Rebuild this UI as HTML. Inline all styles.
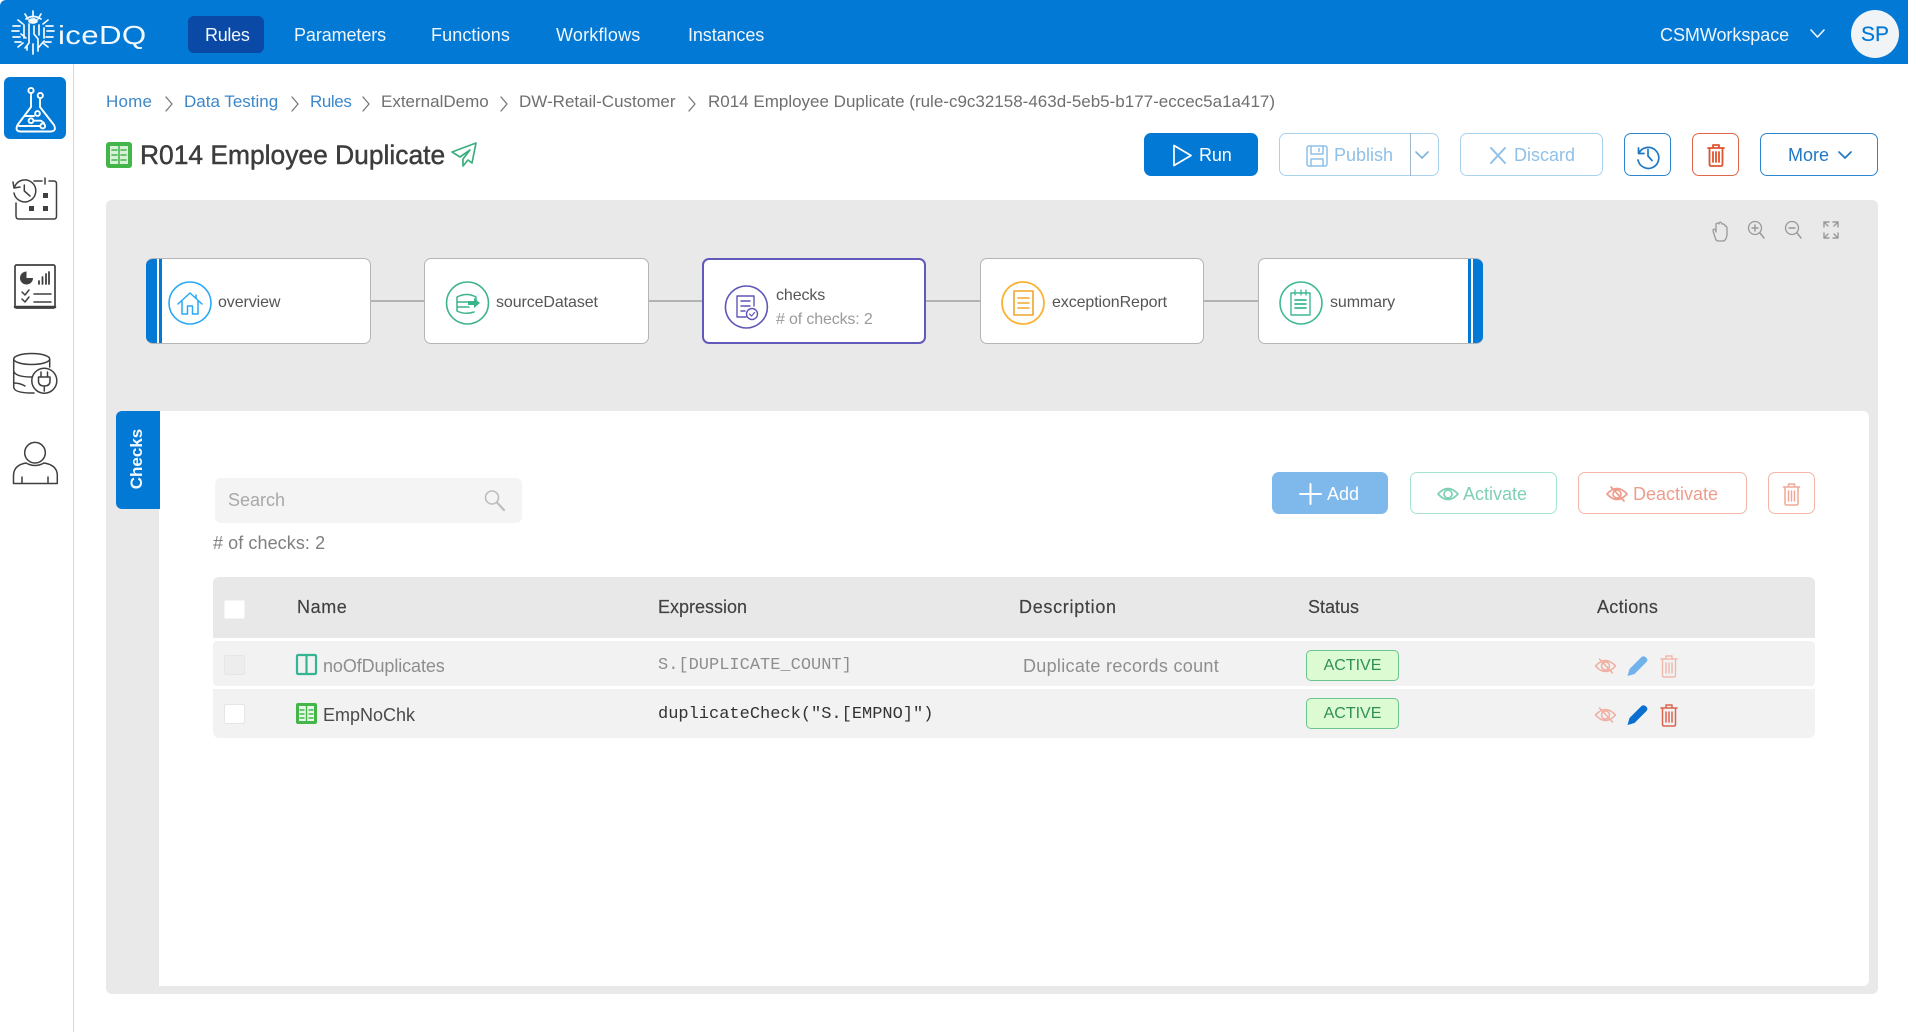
<!DOCTYPE html>
<html><head><meta charset="utf-8"><title>iceDQ</title>
<style>
html,body{margin:0;padding:0;width:1908px;height:1032px;overflow:hidden;background:#fff;font-family:"Liberation Sans",Arial,sans-serif;color:#4a4a4a}
.a{position:absolute}
.t{position:absolute;white-space:nowrap;line-height:24px;height:24px}
.b{position:absolute;box-sizing:border-box;border-radius:7px;background:#fff}
.n{position:absolute;box-sizing:border-box;top:258px;height:86px;width:225px;background:#fff;border:1.5px solid #b5b5b5;border-radius:7px;overflow:hidden}
.row{position:absolute;left:213px;width:1602px;background:#f2f2f3;border-radius:4px}
.cb{position:absolute;left:224px;width:21px;height:20px;background:#fff;border:1px solid #e6e6e6;border-radius:2px;box-sizing:border-box}
.nav{color:#f0f6fc;font-size:18px}
.bc{font-size:17px;top:90px;color:#6f6f6f}
.l{color:#3d87c9}
.th{font-size:18px;top:595px;color:#404040;-webkit-text-stroke:.15px #404040}
.mono{font-family:"Liberation Mono",monospace;font-size:17px}
.act{position:absolute;left:1306px;width:93px;height:31px;box-sizing:border-box;background:#dcfbd2;border:1px solid #6cc48e;border-radius:5px;color:#2f8f57;font-size:16px;line-height:30px;text-align:center}
.nt{font-size:16px;color:#555;top:291px;letter-spacing:-.1px}
svg.o{position:absolute;left:0;top:0;z-index:5;pointer-events:none}
</style></head><body>

<div class="a" style="left:0;top:0;width:1908px;height:64px;background:#0379d6;border-top-left-radius:6px"></div>
<div class="a" style="left:188px;top:16px;width:76px;height:37px;background:#0a49a6;border-radius:6px"></div>
<div class="t" style="left:58px;top:20px;height:30px;line-height:30px;font-size:26px;color:#f4f9fd;letter-spacing:.3px;transform:scaleX(1.2);transform-origin:left center">iceDQ</div>
<div class="t nav" style="left:205px;top:23px;letter-spacing:-.3px">Rules</div>
<div class="t nav" style="left:294px;top:23px;letter-spacing:-.1px">Parameters</div>
<div class="t nav" style="left:431px;top:23px;letter-spacing:.1px">Functions</div>
<div class="t nav" style="left:556px;top:23px;letter-spacing:.2px">Workflows</div>
<div class="t nav" style="left:688px;top:23px;letter-spacing:-.1px">Instances</div>
<div class="t nav" style="left:1660px;top:23px;letter-spacing:-.05px">CSMWorkspace</div>
<div class="a" style="left:1851px;top:10px;width:48px;height:48px;border-radius:50%;background:#f1f4f7;color:#0379d6;font-size:21px;line-height:50px;text-align:center;-webkit-text-stroke:.2px #0379d6">SP</div>

<div class="a" style="left:73px;top:64px;width:1px;height:968px;background:#d8d8d8"></div>
<div class="a" style="left:4px;top:77px;width:62px;height:62px;background:#0379d6;border-radius:6px"></div>

<div class="t bc l" style="left:106px;letter-spacing:.2px">Home</div>
<div class="t bc l" style="left:184px">Data Testing</div>
<div class="t bc l" style="left:310px;letter-spacing:-.4px">Rules</div>
<div class="t bc" style="left:381px">ExternalDemo</div>
<div class="t bc" style="left:519px">DW-Retail-Customer</div>
<div class="t bc" style="left:708px">R014 Employee Duplicate (rule-c9c32158-463d-5eb5-b177-eccec5a1a417)</div>

<div class="t" style="left:140px;top:139px;height:32px;line-height:32px;font-size:26.4px;color:#3c3c3c;-webkit-text-stroke:.45px #3c3c3c">R014 Employee Duplicate</div>

<div class="b" style="left:1144px;top:133px;width:114px;height:43px;background:#0379d6"></div>
<div class="t" style="left:1199px;top:143px;font-size:18px;color:#fff;letter-spacing:-.1px">Run</div>
<div class="b" style="left:1279px;top:133px;width:160px;height:43px;border:1px solid #a9d2ef"></div>
<div class="a" style="left:1410px;top:133px;width:1px;height:43px;background:#9fb6c8"></div>
<div class="t" style="left:1334px;top:143px;font-size:18px;color:#8fc0e8">Publish</div>
<div class="b" style="left:1460px;top:133px;width:143px;height:43px;border:1px solid #a9d2ef"></div>
<div class="t" style="left:1514px;top:143px;font-size:18px;color:#8fc0e8">Discard</div>
<div class="b" style="left:1624px;top:133px;width:47px;height:43px;border:1px solid #2c86cf"></div>
<div class="b" style="left:1692px;top:133px;width:47px;height:43px;border:1px solid #e0684a"></div>
<div class="b" style="left:1760px;top:133px;width:118px;height:43px;border:1px solid #2c86cf"></div>
<div class="t" style="left:1788px;top:143px;font-size:18px;color:#1f78c4">More</div>

<div class="a" style="left:106px;top:200px;width:1772px;height:794px;background:#e9e9ea;border-radius:6px"></div>
<div class="a" style="left:370px;top:300px;width:888px;height:2px;background:#b3b3b3"></div>

<div class="n" style="left:146px;border-left:none"><div class="a" style="left:0;top:0;width:11px;height:86px;background:#0379d6"></div><div class="a" style="left:13px;top:0;width:3px;height:86px;background:#0379d6"></div></div>
<div class="t nt" style="left:218px">overview</div>
<div class="n" style="left:424px"></div>
<div class="t nt" style="left:496px">sourceDataset</div>
<div class="n" style="left:702px;width:224px;border:2.5px solid #6259bd"></div>
<div class="t nt" style="left:776px;top:284px">checks</div>
<div class="t nt" style="left:776px;top:308px;color:#9a9a9a;letter-spacing:-.15px"># of checks: 2</div>
<div class="n" style="left:980px;width:224px"></div>
<div class="t nt" style="left:1052px">exceptionReport</div>
<div class="n" style="left:1258px;border-right:none"><div class="a" style="right:0;top:0;width:10px;height:86px;background:#0379d6"></div><div class="a" style="right:12px;top:0;width:3px;height:86px;background:#0379d6"></div></div>
<div class="t nt" style="left:1330px">summary</div>

<div class="a" style="left:159px;top:411px;width:1710px;height:575px;background:#fff;border-radius:0 6px 6px 0"></div>
<div class="a" style="left:116px;top:411px;width:44px;height:98px;background:#0379d6;border-radius:6px 0 0 6px"></div>
<div class="t" style="left:100px;top:447px;width:74px;text-align:center;font-size:17px;font-weight:bold;color:#f4f9fd;transform:rotate(-90deg)">Checks</div>

<div class="a" style="left:215px;top:478px;width:307px;height:45px;background:#f4f4f5;border-radius:6px"></div>
<div class="t" style="left:228px;top:488px;font-size:18px;color:#a8a8a8">Search</div>
<div class="t" style="left:213px;top:531px;font-size:18px;color:#7f7f7f;letter-spacing:.08px"># of checks: 2</div>

<div class="b" style="left:1272px;top:472px;width:116px;height:42px;background:#7fb8ea"></div>
<div class="t" style="left:1327px;top:482px;font-size:18px;color:#fff">Add</div>
<div class="b" style="left:1410px;top:472px;width:147px;height:42px;border:1px solid #a6e3cf"></div>
<div class="t" style="left:1463px;top:482px;font-size:18px;color:#7ed0b4">Activate</div>
<div class="b" style="left:1578px;top:472px;width:169px;height:42px;border:1px solid #f3b5a8"></div>
<div class="t" style="left:1633px;top:482px;font-size:18px;color:#ee9d8d">Deactivate</div>
<div class="b" style="left:1768px;top:472px;width:47px;height:42px;border:1px solid #f3b5a8"></div>

<div class="a" style="left:213px;top:577px;width:1602px;height:61px;background:#e8e8e9;border-radius:6px 6px 0 0"></div>
<div class="row" style="top:641px;height:45px"></div>
<div class="row" style="top:689px;height:49px;border-radius:0 0 6px 6px"></div>
<div class="cb" style="top:600px;height:19px;border-color:#f4f4f4"></div>
<div class="cb" style="top:655px;background:#ededee"></div>
<div class="cb" style="top:704px"></div>

<div class="t th" style="left:297px;letter-spacing:.6px">Name</div>
<div class="t th" style="left:658px">Expression</div>
<div class="t th" style="left:1019px;letter-spacing:.7px">Description</div>
<div class="t th" style="left:1308px">Status</div>
<div class="t th" style="left:1597px;letter-spacing:.3px">Actions</div>

<div class="t" style="left:323px;top:654px;font-size:18px;color:#8e8e8e;letter-spacing:-.1px">noOfDuplicates</div>
<div class="t mono" style="left:658px;top:654px;color:#8e8e8e">S.[DUPLICATE_COUNT]</div>
<div class="t" style="left:1023px;top:654px;font-size:18px;color:#8e8e8e;letter-spacing:.3px">Duplicate records count</div>
<div class="act" style="top:650px">ACTIVE</div>

<div class="t" style="left:323px;top:703px;font-size:18px;color:#4a4a4a">EmpNoChk</div>
<div class="t mono" style="left:658px;top:703px;color:#333">duplicateCheck("S.[EMPNO]")</div>
<div class="act" style="top:698px">ACTIVE</div>

<svg class="o" width="1908" height="1032" viewBox="0 0 1908 1032" fill="none" stroke-linecap="round" stroke-linejoin="round">
 <defs>
  <g id="trash"><path d="M-8-7H8M-3-7V-10H3V-7M-6.5-7V9.5Q-6.5 11-5 11H5Q6.5 11 6.5 9.5V-7M-3-3V7M0-3V7M3-3V7"/></g>
  <g id="eye"><path d="M-10 0Q0-11 10 0Q0 11-10 0Z"/><circle r="4"/></g>
  <g id="eyeoff"><path d="M-10 0Q0-11 10 0Q0 11-10 0Z"/><circle r="4"/><path d="M-6-7L7 7"/></g>
  <g id="pencil"><path d="M-10 10L-8 3L4-9Q6-10.500 8-9L9.500-7.500Q10.500-6 9-4L-3 8Z" stroke="none"/></g>
 </defs>

 <!-- logo -->
 <g stroke="#f4f9fd" stroke-width="1.700">
  <path d="M33 11V17M25 14L28 19M41 14L38 19M18 20L23 24M48 20L43 24M13 26H20M53 26H46M12 31H19M54 31H47M13 37H20M53 37H46M15 42H21M51 42H45M18 47L23 43M48 47L43 43"/>
  <path d="M24 25V38M29 24V43L25 48M34 26V34L38 39V51M33 54V44M39 25V35M44 28V38M21 34L26 38M44 41L39 47M26 19Q33 14 41 19M27 50V46"/>
  <ellipse cx="33" cy="21" rx="4" ry="2" fill="#f4f9fd"/>
 </g>

 <!-- workspace chevron -->
 <path d="M1811 30L1817.500 37L1824 30" stroke="#f0f6fc" stroke-width="1.600"/>

 <!-- sidebar flask -->
 <g stroke="#fff" stroke-width="1.900">
  <circle cx="31" cy="90.500" r="2.600"/><circle cx="40.300" cy="95.500" r="2.600"/>
  <path d="M31 93V107L17.500 125Q14.500 131.500 21 131.500H50Q57 131.500 54 125L40 107V98"/>
  <path d="M24.500 116H34"/><circle cx="37.500" cy="113.500" r="2.400"/>
  <circle cx="31" cy="120.700" r="2.400"/><path d="M34 120.700H41L44 123"/>
  <circle cx="42.700" cy="126" r="2.400"/><path d="M19 126H40"/>
 </g>
 <!-- sidebar others -->
 <g stroke="#3f3f3f" stroke-width="1.500">
  <path d="M34 181H42M45 178V184M49 181H54Q56.500 181 56.500 184V216Q56.500 219 54 219H19Q16 219 16 216V203"/>
  <path d="M14.500 187A11 11 0 1 1 14 193"/><path d="M13 182L14 188L20 187"/><path d="M24.300 185V191L30 196"/>
  <rect x="15" y="265" width="40" height="43" rx="1.500" stroke-width="1.700"/><path d="M15 307H55" stroke-width="2.500"/>
  <path d="M39 284V281M42.500 284V277M46 284V274M49 284V272" stroke-width="1.800"/>
  <path d="M22 292L25 295L29 290M22 299L25 302L29 297M34 294H51M34 302H51"/>
  <ellipse cx="31.700" cy="359" rx="18" ry="5.500"/>
  <path d="M13.700 359V387Q14 393 31.700 393Q33 393 34 393M13.700 371Q15 377 31.700 377H33M13.700 383Q20 383 25 386M49.700 359V367"/>
  <circle cx="44.300" cy="380.700" r="12.500" fill="#fff"/>
  <path d="M38.500 377H50V381Q50 386 44.300 386Q38.500 386 38.500 381ZM41 377V372M47.500 377V372M44.300 386V391"/>
  <circle cx="35" cy="452.700" r="10.300"/>
  <path d="M13.500 483.500V475Q14 465 26 463Q35 468 44 463Q57 465 57.300 475V483.500ZM22 483V477M48 483V477"/>
 </g>
 <circle cx="26.500" cy="278" r="6.500" fill="#3f3f3f"/><path d="M26.500 278V271.500H33V278Z" fill="#fff"/>
 <g fill="#3f3f3f"><rect x="43" y="193" width="5" height="5"/><rect x="29" y="206" width="5" height="5"/><rect x="43" y="206" width="5" height="5"/></g>

 <!-- breadcrumb separators -->
 <g stroke="#777" stroke-width="1.300">
  <path d="M166 97L172 104L166 111M292 97L298 104L292 111M363 97L369 104L363 111M501 97L507 104L501 111M689 97L695 104L689 111"/>
 </g>

 <!-- title icon -->
 <rect x="106" y="142" width="26" height="26" rx="3" fill="#44b649"/>
 <rect x="110" y="146" width="18" height="18" fill="#d8f0da"/>
 <path d="M119 146V164M112 150H117M112 155H117M112 160H117M121 150H126M121 155H126M121 160H126" stroke="#44b649" stroke-width="1.600"/>
 <path d="M476 143L452 152L460 157L470 150L463 159V166L468 160L472 163Z" stroke="#3cae7e" stroke-width="1.700"/>

 <!-- top action icons -->
 <path d="M1174 145.500V165.500L1191 155.500Z" stroke="#fff" stroke-width="1.700"/>
 <g stroke="#8fc0e8" stroke-width="1.500">
  <rect x="1307" y="146" width="20" height="20" rx="2"/><path d="M1311 146V154H1323V146M1311 166V159H1323V166M1319 148.500V151.500"/>
  <path d="M1416 152L1422 158L1428 152" stroke-width="1.600" stroke="#7fb5dd"/>
  <path d="M1491 148L1505 163M1505 148L1491 163" stroke-width="2"/>
 </g>
 <g stroke="#1f78c4" stroke-width="1.700">
  <path d="M1638.500 148L1638.500 153.500H1644M1639 153A10.500 10.500 0 1 1 1638 160"/><path d="M1648 149.500V156L1652 160.500"/>
  <path d="M1839 152L1845 158L1851 152"/>
 </g>
 <use href="#trash" x="1716" y="155" stroke="#e0542f" stroke-width="1.800"/>

 <!-- canvas tools -->
 <g stroke="#999" stroke-width="1.300">
  <path d="M1716 240L1713 231Q1713 228 1715.500 230L1716 232V224Q1718 222 1719 224V223Q1721 221 1722 224L1723 224Q1725 224 1725 226Q1727 226 1727 228V235Q1726 241 1723 241H1718Z"/>
  <circle cx="1755" cy="228" r="6.500"/><path d="M1760 233L1764 238M1752 228H1758M1755 225V231" stroke-width="1.500"/>
  <circle cx="1792" cy="228" r="6.500"/><path d="M1797 233L1801 238M1789 228H1795" stroke-width="1.500"/>
  <path d="M1824 227V222H1829M1838 227V222H1833M1824 233V238H1829M1838 233V238H1833M1824 222L1828 226M1838 222L1834 226M1824 238L1828 234M1838 238L1834 234" stroke-width="1.400"/>
 </g>

 <!-- node icons -->
 <circle cx="190" cy="303" r="21" stroke="#29a9f5" stroke-width="1.600" fill="#fff"/>
 <path d="M178 304L190 293L202 304M182 301.500V314H187.500V306H192.500V314H198V301.500M196 295V298" stroke="#29a9f5" stroke-width="1.500"/>
 <circle cx="467.500" cy="303" r="21" stroke="#3cb48a" stroke-width="1.600" fill="#fff"/>
 <path d="M457 297Q467 292 476 297V302M457 297V311Q465 315 474 312M457 302H469M457 307H469" stroke="#3cb48a" stroke-width="1.500"/>
 <path d="M468 301H474V298L480 303L474 308V305H468Z" fill="#3cb48a"/>
 <circle cx="746.400" cy="307" r="21" stroke="#5e57b5" stroke-width="1.600" fill="#fff"/>
 <path d="M737 296H754V306M737 296V317H746M741 301H750M741 306H750M741 311H745" stroke="#5e57b5" stroke-width="1.400"/>
 <circle cx="752" cy="314" r="5.500" stroke="#5e57b5" stroke-width="1.400"/><path d="M749.500 314L751.500 316L754.500 312.500" stroke="#5e57b5" stroke-width="1.200"/>
 <circle cx="1023" cy="303" r="21" stroke="#f9b233" stroke-width="1.800" fill="#fff"/>
 <rect x="1014" y="291" width="19" height="24" stroke="#f0a52c" stroke-width="1.600"/><path d="M1018 298H1029M1018 303H1029M1018 308H1029" stroke="#f0a52c" stroke-width="1.500"/>
 <circle cx="1301" cy="303" r="21" stroke="#3db894" stroke-width="1.600" fill="#fff"/>
 <rect x="1291" y="293" width="19" height="22" stroke="#3db894" stroke-width="1.400"/><path d="M1295 290V295M1301 290V295M1306 290V295" stroke="#3db894" stroke-width="1.300"/><path d="M1295 300H1306M1295 304H1306M1295 308H1306" stroke="#3db894" stroke-width="1.700"/>

 <!-- search -->
 <circle cx="492" cy="497.500" r="6.500" stroke="#bdbdbd" stroke-width="1.600"/><path d="M497 502.500L504 510" stroke="#bdbdbd" stroke-width="2.200"/>

 <!-- list action icons -->
 <path d="M1300 494H1321M1310.500 484V504" stroke="#fff" stroke-width="2"/>
 <use href="#eye" x="1448" y="494" stroke="#7ed0b4" stroke-width="1.700"/>
 <use href="#eyeoff" x="1617" y="494" stroke="#ee9d8d" stroke-width="1.700"/>
 <use href="#trash" x="1791.500" y="494" stroke="#f0a797" stroke-width="1.500"/>

 <!-- row icons -->
 <rect x="297" y="655" width="19" height="19" rx="1" stroke="#36b592" stroke-width="2.200"/><path d="M306.500 655V674" stroke="#36b592" stroke-width="2.200"/>
 <rect x="296" y="703" width="21" height="21" rx="2" fill="#44b649"/><rect x="299" y="706" width="15" height="15" fill="#e9f7ea"/>
 <path d="M306.500 706V721M300 710H304M300 714H304M300 718H304M309 710H313M309 714H313M309 718H313" stroke="#44b649" stroke-width="1.400"/>

 <use href="#eyeoff" x="1605.500" y="666" stroke="#efaea0" stroke-width="1.500"/>
 <use href="#pencil" x="1637.500" y="666" fill="#71b2ea"/>
 <use href="#trash" x="1669" y="666" stroke="#efb9ad" stroke-width="1.400"/>
 <use href="#eyeoff" x="1605.500" y="715" stroke="#efaea0" stroke-width="1.500"/>
 <use href="#pencil" x="1637.500" y="715" fill="#0a6fd1"/>
 <use href="#trash" x="1669" y="715" stroke="#d9644f" stroke-width="1.500"/>
</svg>
</body></html>
